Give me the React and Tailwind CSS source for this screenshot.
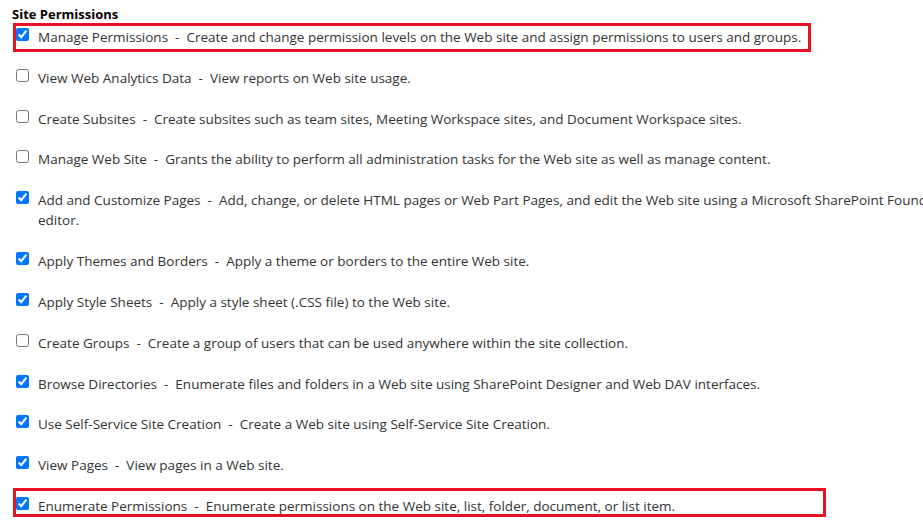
import React from 'react';

const perms = [
    { name: 'Manage Permissions', desc: 'Create and change permission levels on the Web site and assign permissions to users and groups.', on: true, box: 'w-[798px] -top-[4px]' },
    { name: 'View Web Analytics Data', desc: 'View reports on Web site usage.', on: false },
    { name: 'Create Subsites', desc: 'Create subsites such as team sites, Meeting Workspace sites, and Document Workspace sites.', on: false },
    { name: 'Manage Web Site', desc: 'Grants the ability to perform all administration tasks for the Web site as well as manage content.', on: false },
    { name: 'Add and Customize Pages', desc: 'Add, change, or delete HTML pages or Web Part Pages, and edit the Web site using a Microsoft SharePoint Foundation-compatible editor.', on: true },
    { name: 'Apply Themes and Borders', desc: 'Apply a theme or borders to the entire Web site.', on: true },
    { name: 'Apply Style Sheets', desc: 'Apply a style sheet (.CSS file) to the Web site.', on: true },
    { name: 'Create Groups', desc: 'Create a group of users that can be used anywhere within the site collection.', on: false },
    { name: 'Browse Directories', desc: 'Enumerate files and folders in a Web site using SharePoint Designer and Web DAV interfaces.', on: true },
    { name: 'Use Self-Service Site Creation', desc: 'Create a Web site using Self-Service Site Creation.', on: true },
    { name: 'View Pages', desc: 'View pages in a Web site.', on: true },
    { name: 'Enumerate Permissions', desc: 'Enumerate permissions on the Web site, list, folder, document, or list item.', on: true, box: 'w-[813px] -top-[8px]' },
];

export default function App() {
    return (
        <div className="w-full h-[522px] overflow-hidden bg-white" style={{ fontFamily: '"Open Sans", "Noto Sans", sans-serif' }}>
            <div className="w-[1045px] pt-[5px] pl-[12px]">
                <h3 className="text-[13px] leading-[18px] font-bold text-black">Site Permissions</h3>

                {/* liste des permissions */}
                <div className="flex flex-col gap-[20.5px] pt-[4px] pl-[4px] text-[13.5px] leading-[20.3px] text-[#333]">
                    {perms.map((p) => (
                        <div key={p.name} className="relative flex items-start">
                            <input
                                type="checkbox"
                                defaultChecked={p.on}
                                className="m-0 mt-[1px] mr-[9px] w-[13px] h-[13px] shrink-0 accent-[#0075ff]"
                            />
                            <span>{p.name}&nbsp; - &nbsp;{p.desc}</span>
                            {p.box && (
                                <span className={`absolute -left-[3px] h-[29px] border-3 border-[#e81123] pointer-events-none ${p.box}`}></span>
                            )}
                        </div>
                    ))}
                </div>
            </div>
        </div>
    );
}
